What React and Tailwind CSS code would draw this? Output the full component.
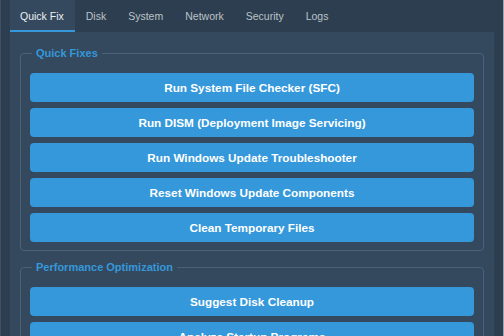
import React from "react";

const tabs = ["Quick Fix", "Disk", "System", "Network", "Security", "Logs"];

const groups = [
  {
    title: "Quick Fixes",
    actions: [
      "Run System File Checker (SFC)",
      "Run DISM (Deployment Image Servicing)",
      "Run Windows Update Troubleshooter",
      "Reset Windows Update Components",
      "Clean Temporary Files",
    ],
  },
  {
    title: "Performance Optimization",
    actions: ["Suggest Disk Cleanup", "Analyze Startup Programs", "Optimize Drives"],
  },
];

const Group = ({ title, actions }) => (
  <fieldset className="rounded-[4px] border border-[#4b6177] px-[9px] pb-[8px]">
    <legend className="ml-[2px] px-[4px] text-[11px] leading-[14px] font-bold text-[#3498db]">
      {title}
    </legend>
    <div className="mt-[13px] flex flex-col gap-[6px]">
      {actions.map((a) => (
        <button
          key={a}
          className="h-[29px] w-full shrink-0 rounded-[4px] bg-[#3498db] text-[11.75px] font-bold text-white"
        >
          {a}
        </button>
      ))}
    </div>
  </fieldset>
);

const App = () => {
  return (
    <div
      className="flex h-[336px] w-[504px] flex-col overflow-hidden border-l border-r border-l-[#3e5062] border-r-[#9aa5b0] bg-[#2c3e50]"
      style={{ fontFamily: '"Liberation Sans", Arial, sans-serif' }}
    >
      {/* tab strip */}
      <div className="flex h-[32px] shrink-0 pl-[9px]">
        {tabs.map((t, i) => (
          <div
            key={t}
            className={
              i === 0
                ? "flex items-center border-b-2 border-[#3498db] bg-[#34495e] pl-[10px] pr-[11px] pt-[3px] text-[10.5px] text-[#ecf0f1]"
                : "flex items-center border-b-2 border-transparent px-[11px] pt-[3px] text-[10.5px] text-[#bdc3c7]"
            }
          >
            {t}
          </div>
        ))}
      </div>

      {/* page */}
      <div className="ml-[9px] mr-[9px] flex flex-1 flex-col gap-[9px] overflow-hidden bg-[#34495e] px-[10px] pt-[14px]">
        {groups.map((g) => (
          <Group key={g.title} {...g} />
        ))}
      </div>
    </div>
  );
};

export default App;
